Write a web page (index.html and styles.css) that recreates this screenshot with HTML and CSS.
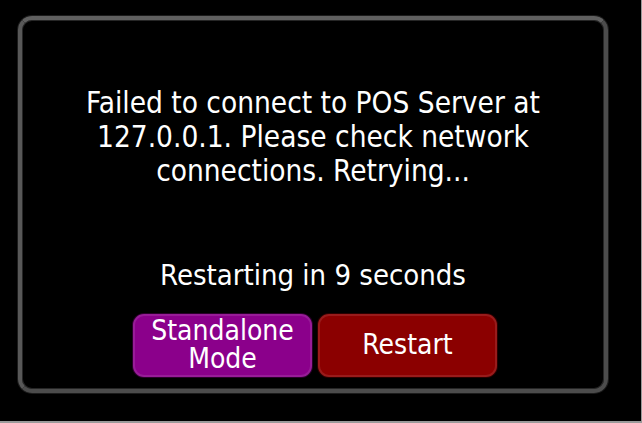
FILE: index.html
```html
<!DOCTYPE html>
<html>
<head>
<meta charset="utf-8">
<link rel="stylesheet" href="styles.css">
</head>
<body>
<div class="frame">
  <div class="panel">
    <p class="message">Failed to connect to POS Server at 127.0.0.1. Please check network connections. Retrying...</p>
    <p class="countdown">Restarting in 9 seconds</p>
    <div class="buttons">
      <button class="btn btn-standalone">Standalone<br>Mode</button>
      <button class="btn btn-restart">Restart</button>
    </div>
  </div>
</div>
</body>
</html>
```
FILE: styles.css
```css
html, body {
  margin: 0;
  padding: 0;
  background: #000;
}
body {
  width: 642px;
  height: 423px;
  overflow: hidden;
}
.frame {
  box-sizing: border-box;
  width: 642px;
  height: 423px;
  border-right: 1px solid #9a9a9a;
  border-bottom: 2px solid #9a9a9a;
  padding: 16px 0 0 18px;
}
.panel {
  box-sizing: border-box;
  width: 590px;
  height: 377px;
  border: 4px solid #4c4c4c;
  border-top-color: #606060;
  border-left-color: #585858;
  border-radius: 14px;
  box-shadow: inset 0 0 0 1px #262626, 0 0 0 1px #1c1c1c;
  display: flex;
  flex-direction: column;
  align-items: center;
  padding-top: 66px;
  font-family: "DejaVu Sans Condensed", "DejaVu Sans", sans-serif;
  color: #fff;
}
.message {
  margin: 0;
  width: 520px;
  font-size: 29.5px;
  line-height: 34px;
  text-align: center;
}
.countdown {
  margin: 70px 0 0;
  font-size: 29px;
  line-height: 34px;
}
.buttons {
  display: flex;
  gap: 6px;
  margin-top: 22px;
  margin-left: 4px;
}
.btn {
  box-sizing: border-box;
  width: 179px;
  height: 63px;
  border-radius: 11px;
  font-family: inherit;
  font-size: 28px;
  line-height: 28px;
  color: #fff;
  padding: 0 0 2px;
  cursor: pointer;
}
.btn-standalone {
  background: #8b008b;
  border: 2px solid #981c98;
  box-shadow: 0 0 0 1px #2a002a;
}
.btn-restart {
  background: #8b0000;
  border: 2px solid #991b1b;
  box-shadow: 0 0 0 1px #2a0000;
}
```
